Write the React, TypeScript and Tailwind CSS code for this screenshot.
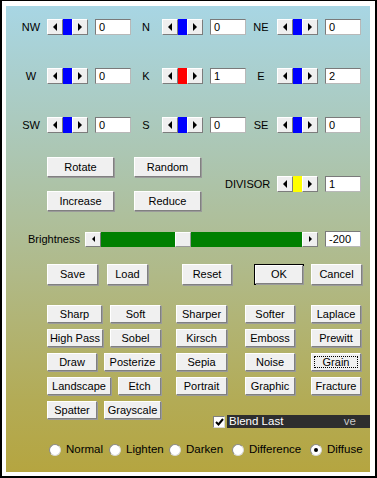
import React from 'react';

type Dir = 'left' | 'right';

function Arrow({ dir, small }: { dir: Dir; small?: boolean }) {
  const w = small ? 3 : 4;
  const h = small ? 6 : 8;
  const pts = dir === 'left' ? `${w},0 ${w},${h} 0,${h / 2}` : `0,0 0,${h} ${w},${h / 2}`;
  return (
    <svg width={w} height={h} viewBox={`0 0 ${w} ${h}`}>
      <polygon points={pts} fill="#000" />
    </svg>
  );
}

function ArrowBtn({ dir, small }: { dir: Dir; small?: boolean }) {
  return (
    <div className="flex h-full w-[16px] shrink-0 items-center justify-center border border-t-white border-l-white border-r-[#7c7c7c] border-b-[#7c7c7c] bg-[#efefef]">
      <Arrow dir={dir} small={small} />
    </div>
  );
}

// little spin slider: [<][thumb][>]
function Slider({ thumb }: { thumb: string }) {
  return (
    <div className="flex h-[16px] w-[41px] shrink-0">
      <ArrowBtn dir="left" />
      <div className={`h-full w-[9px] ${thumb}`} />
      <ArrowBtn dir="right" />
    </div>
  );
}

function ValueBox({ value }: { value: string }) {
  return (
    <div className="h-[16px] w-[36px] shrink-0 border border-[#7a7a7a] border-r-[#b8b8b8] border-b-[#b8b8b8] bg-white pl-[3px] leading-[14px]">
      {value}
    </div>
  );
}

function Btn({ label, className = '' }: { label: string; className?: string }) {
  return (
    <button
      type="button"
      className={`flex shrink-0 items-center justify-center border border-t-white border-l-white border-r-[#808080] border-b-[#808080] bg-[#f0f0f0] shadow-[1px_1px_0_#9a9a9a] leading-none text-black ${className}`}
    >
      {label}
    </button>
  );
}

function Group({ label, value, thumb }: { label: string; value: string; thumb: string }) {
  return (
    <div className="flex items-center">
      <div className="w-[24px] text-center">{label}</div>
      <div className="ml-[4px]">
        <Slider thumb={thumb} />
      </div>
      <div className="ml-[7px]">
        <ValueBox value={value} />
      </div>
    </div>
  );
}

const kernel = [
  [
    { label: 'NW', value: '0' },
    { label: 'N', value: '0' },
    { label: 'NE', value: '0' },
  ],
  [
    { label: 'W', value: '0' },
    { label: 'K', value: '1' },
    { label: 'E', value: '2' },
  ],
  [
    { label: 'SW', value: '0' },
    { label: 'S', value: '0' },
    { label: 'SE', value: '0' },
  ],
];

const filterRows = [
  { left: [['Sharp', 'w-[55px]'], ['Soft', 'w-[51px]']], right: ['Sharper', 'Softer', 'Laplace'] },
  { left: [['High Pass', 'w-[56px]'], ['Sobel', 'w-[51px]']], right: ['Kirsch', 'Emboss', 'Prewitt'] },
  { left: [['Draw', 'w-[50px]'], ['Posterize', 'w-[57px]']], right: ['Sepia', 'Noise', 'Grain'] },
  { left: [['Landscape', 'w-[64px]'], ['Etch', 'w-[43px]']], right: ['Portrait', 'Graphic', 'Fracture'] },
];

function Radio({ label, checked, className }: { label: string; checked?: boolean; className: string }) {
  return (
    <div className={`flex items-center gap-[5px] ${className}`}>
      <div className="flex h-[12px] w-[12px] items-center justify-center rounded-full border border-[#8a8a8a] border-r-[#d8d8d8] border-b-[#d8d8d8] bg-white">
        {checked && <div className="h-[4px] w-[4px] rounded-full bg-black" />}
      </div>
      <span>{label}</span>
    </div>
  );
}

export default function App() {
  return (
    <div className="box-border flex h-[478px] w-[377px] border-2 border-t border-black bg-white pt-[5px] pl-[4px] pr-[5px] pb-[4px] font-['Liberation_Sans',Arial,sans-serif] text-[11px] text-black">
      <div className="flex flex-1 flex-col bg-[linear-gradient(to_bottom,#a8d6e4,#acc6b2_32%,#b0b987_58%,#b3ab55_85%,#b5a540)] pt-[12px]">
        {/* kernel matrix */}
        {kernel.map((row, i) => (
          <div key={i} className={`flex h-[18px] items-center gap-[3px] pl-[13px] ${i > 0 ? 'mt-[31px]' : ''}`}>
            {row.map(c => (
              <Group
                key={c.label}
                label={c.label}
                value={c.value}
                thumb={c.label === 'K' ? 'bg-[#ff0000]' : 'bg-[#0000ff]'}
              />
            ))}
          </div>
        ))}

        {/* rotate / random / divisor */}
        <div className="mt-[23px] flex items-center pl-[41px]">
          <div className="flex flex-col gap-[14px]">
            <div className="flex gap-[20px]">
              <Btn label="Rotate" className="h-[20px] w-[67px] text-[11px]" />
              <Btn label="Random" className="h-[20px] w-[67px] text-[11px]" />
            </div>
            <div className="flex gap-[20px]">
              <Btn label="Increase" className="h-[20px] w-[67px] text-[11px]" />
              <Btn label="Reduce" className="h-[20px] w-[67px] text-[11px]" />
            </div>
          </div>
          <div className="ml-[24px] flex items-center">
            <span className="w-[45px]">DIVISOR</span>
            <div className="ml-[7px]">
              <Slider thumb="bg-[#ffff00]" />
            </div>
            <div className="ml-[7px]">
              <ValueBox value="1" />
            </div>
          </div>
        </div>

        {/* brightness */}
        <div className="mt-[20px] flex h-[16px] items-center pl-[22px]">
          <span className="w-[57px]">Brightness</span>
          <div className="flex h-[15px] w-[233px]">
            <ArrowBtn dir="left" small />
            <div className="h-full w-[74px] bg-[#008000]" />
            <div className="h-full w-[16px] border border-t-white border-l-white border-r-[#9a9a9a] border-b-[#9a9a9a] bg-[#efefef]" />
            <div className="h-full flex-1 bg-[#008000]" />
            <ArrowBtn dir="right" small />
          </div>
          <div className="ml-[7px]">
            <ValueBox value="-200" />
          </div>
        </div>

        {/* save / load / reset / ok / cancel */}
        <div className="mt-[17px] flex h-[21px] pl-[41px] text-[11px]">
          <Btn label="Save" className="h-full w-[51px]" />
          <Btn label="Load" className="ml-[9px] h-full w-[41px]" />
          <Btn label="Reset" className="ml-[34px] h-full w-[50px]" />
          <div className="ml-[22px] flex h-full w-[50px] border border-black">
            <Btn label="OK" className="h-full w-full" />
          </div>
          <Btn label="Cancel" className="ml-[7px] h-full w-[51px]" />
        </div>

        {/* filter presets */}
        <div className="mt-[20px] flex flex-col gap-[6px] pl-[41px] text-[11px]">
          {filterRows.map((r, i) => (
            <div key={i} className="flex h-[18px]">
              <div className="flex w-[114px] justify-between">
                {r.left.map(([l, w]) => (
                  <Btn key={l} label={l} className={`h-full ${w}`} />
                ))}
              </div>
              <Btn label={r.right[0]} className="ml-[15px] h-full w-[51px]" />
              <Btn label={r.right[1]} className="ml-[18px] h-full w-[50px]" />
              {r.right[2] === 'Grain' ? (
                <button
                  type="button"
                  className="ml-[16px] flex h-full w-[50px] border border-t-white border-l-white border-r-[#808080] border-b-[#808080] bg-[#f0f0f0] p-[2px] shadow-[1px_1px_0_#9a9a9a]"
                >
                  <span className="flex flex-1 items-center justify-center border border-dotted border-black leading-none">
                    Grain
                  </span>
                </button>
              ) : (
                <Btn label={r.right[2]} className="ml-[16px] h-full w-[50px]" />
              )}
            </div>
          ))}
          <div className="flex h-[27px]">
            <div className="flex h-[18px] w-[114px] justify-between">
              <Btn label="Spatter" className="h-full w-[50px]" />
              <Btn label="Grayscale" className="h-full w-[57px]" />
            </div>
            <div className="mt-[14px] ml-[52px] flex h-[13px] flex-1 items-center">
              <div className="flex h-[12px] w-[12px] items-center justify-center border border-[#808080] border-r-[#d8d8d8] border-b-[#d8d8d8] bg-white">
                <svg width="9" height="8" viewBox="0 0 9 8">
                  <path d="M1 4 L3.5 6.5 L8 1" stroke="#000" strokeWidth="2" fill="none" />
                </svg>
              </div>
              <div className="ml-[2px] flex h-full flex-1 items-center bg-[#2e2e2e] pl-[2px] text-[11.5px] text-white">
                <span>Blend Last</span>
                <span className="ml-auto mr-[14px] text-[#c8c8c8]">ve</span>
              </div>
            </div>
          </div>
        </div>

        {/* blend modes */}
        <div className="mt-[15px] flex h-[14px] items-center pl-[43px] text-[11.5px]">
          <Radio label="Normal" className="w-[60px]" />
          <Radio label="Lighten" className="w-[60px]" />
          <Radio label="Darken" className="w-[63px]" />
          <Radio label="Difference" className="w-[78px]" />
          <Radio label="Diffuse" checked className="" />
        </div>
      </div>
    </div>
  );
}
